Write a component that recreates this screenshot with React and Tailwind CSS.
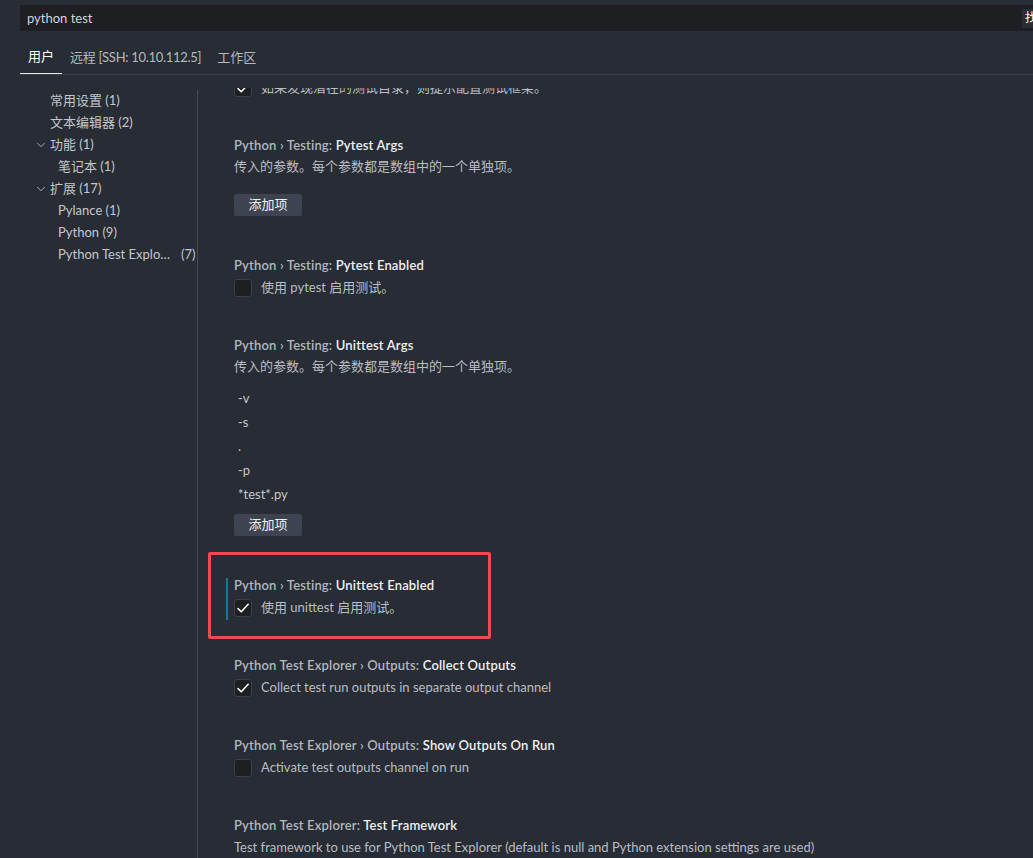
import React from "react";
import { ChevronDown } from "lucide-react";

const FONT = { fontFamily: 'Lato, "Noto Sans CJK SC", sans-serif' };

function Check() {
  return (
    <svg width="16" height="16" viewBox="0 0 16 16" fill="none">
      <path d="M3 8.6 L6.3 11.8 L13.2 4.2" stroke="#ffffff" strokeWidth="1.5" strokeLinecap="round" strokeLinejoin="round" />
    </svg>
  );
}

function Checkbox({ checked }) {
  return (
    <div className="w-[18px] h-[18px] shrink-0 rounded-[3px] border border-[#3b3f47] bg-[#1d1f23] flex items-center justify-center">
      {checked ? <Check /> : null}
    </div>
  );
}

function Title({ prefix, name }) {
  return (
    <div className="h-[20px] leading-[20px] text-[13px] font-semibold whitespace-pre tracking-[0.17px]">
      <span className="text-[#b3b7be]">{prefix}</span>
      <span className="text-[#f0f0f0]">{name}</span>
    </div>
  );
}

function BoolSetting({ prefix, name, text, checked, children }) {
  return (
    <div className="relative pl-[36px] pt-[12px] pb-[25px]">
      {children}
      <Title prefix={prefix} name={name} />
      <div className="mt-[3px] h-[20px] flex items-center gap-[9px]">
        <Checkbox checked={checked} />
        <span className="text-[13px] text-[#b9bdc4] whitespace-nowrap">{text}</span>
      </div>
    </div>
  );
}

function AddButton() {
  return (
    <div className="w-[68px] h-[22px] rounded-[2px] bg-[#3d4350] flex items-center justify-center text-[13px] text-[#f2f2f2]">
      添加项
    </div>
  );
}

function ArraySetting({ prefix, name, desc, items }) {
  return (
    <div className="pl-[36px] pt-[12px] pb-[27px]">
      <Title prefix={prefix} name={name} />
      <div className="mt-[2px] h-[20px] flex items-center text-[13px] text-[#b9bdc4] whitespace-nowrap">{desc}</div>
      {items.length > 0 ? (
        <div className="mt-[10px] flex flex-col">
          {items.map((it, i) => (
            <div key={i} className="h-[24px] flex items-center pl-[4px] text-[13px] text-[#c4c7cc]">{it}</div>
          ))}
        </div>
      ) : null}
      <div className={items.length > 0 ? "mt-[7px]" : "mt-[17px]"}>
        <AddButton />
      </div>
    </div>
  );
}

function TocItem({ label, count, level, chevron, truncate }) {
  return (
    <div className={"h-[22px] flex items-center text-[13px] text-[#c3c6cc] " + (level === 1 ? "pl-[58px]" : "pl-[50px]")}>
      {chevron ? (
        <ChevronDown size={14} strokeWidth={1.4} className="text-[#c3c6cc] -ml-[16px] mr-[2px]" />
      ) : null}
      {truncate ? (
        <>
          <span className="w-[116px] truncate">{label}</span>
          <span className="ml-[7px]">{count}</span>
        </>
      ) : (
        <span className="whitespace-nowrap">{label} {count}</span>
      )}
    </div>
  );
}

export default function App() {
  return (
    <div className="w-[1033px] h-[858px] overflow-hidden bg-[#282c34] flex flex-col" style={FONT}>
      {/* search */}
      <div className="ml-[20px] mt-[5px] w-[1200px] h-[26px] shrink-0 bg-[#1d1f23] flex items-center">
        <span className="pl-[7px] pt-[1px] w-[1002px] shrink-0 text-[13px] text-[#d0d3d8]">python test</span>
        <span className="h-[19px] pl-[3px] pr-[4px] bg-[#2a2d34] flex items-center text-[12px] text-[#ffffff] whitespace-nowrap">找到 16 个设置</span>
      </div>

      {/* tabs */}
      <div className="ml-[20px] mt-[10px] flex border-b border-[#3b3f48] shrink-0">
        <div className="h-[33px] px-[8px] flex items-center border-b border-[#e6e6e6] text-[13px] text-[#ffffff]">用户</div>
        <div className="h-[33px] px-[8px] flex items-center text-[13px] text-[#b6b9bf] tracking-[-0.3px]">远程 [SSH: 10.10.112.5]</div>
        <div className="h-[33px] px-[8px] flex items-center text-[13px] text-[#b6b9bf]">工作区</div>
      </div>

      {/* body */}
      <div className="mt-[13px] flex flex-1 min-h-0">
        <div className="w-[198px] shrink-0 mt-[2px] border-r border-[#454a55] flex flex-col">
          <TocItem label="常用设置" count="(1)" />
          <TocItem label="文本编辑器" count="(2)" />
          <TocItem label="功能" count="(1)" chevron />
          <TocItem label="笔记本" count="(1)" level={1} />
          <TocItem label="扩展" count="(17)" chevron />
          <TocItem label="Pylance" count="(1)" level={1} />
          <TocItem label="Python" count="(9)" level={1} />
          <TocItem label="Python Test Explorer" count="(7)" level={1} truncate />
        </div>

        <div className="flex-1 min-w-0 overflow-hidden">
          <div className="-mt-[45px] flex flex-col">
            <BoolSetting
              prefix="Python › Testing: "
              name="Prompt To Configure"
              text="如果发现潜在的测试目录，则提示配置测试框架。"
              checked
            />
            <ArraySetting
              prefix="Python › Testing: "
              name="Pytest Args"
              desc="传入的参数。每个参数都是数组中的一个单独项。"
              items={[]}
            />
            <BoolSetting prefix="Python › Testing: " name="Pytest Enabled" text="使用 pytest 启用测试。" />
            <ArraySetting
              prefix="Python › Testing: "
              name="Unittest Args"
              desc="传入的参数。每个参数都是数组中的一个单独项。"
              items={["-v", "-s", ".", "-p", "*test*.py"]}
            />
            <BoolSetting prefix="Python › Testing: " name="Unittest Enabled" text="使用 unittest 启用测试。" checked>
              <div className="absolute left-[28px] top-[15px] w-[2px] h-[42px] bg-[#13799c]" />
              <div className="absolute left-[10px] top-[-11px] w-[283px] h-[87px] border-[3px] border-[#ec4b4f] rounded-[2px] pointer-events-none" />
            </BoolSetting>
            <BoolSetting
              prefix="Python Test Explorer › Outputs: "
              name="Collect Outputs"
              text="Collect test run outputs in separate output channel"
              checked
            />
            <BoolSetting
              prefix="Python Test Explorer › Outputs: "
              name="Show Outputs On Run"
              text="Activate test outputs channel on run"
            />
            <div className="pl-[36px] pt-[12px]">
              <Title prefix="Python Test Explorer: " name="Test Framework" />
              <div className="mt-[3px] h-[20px] flex items-center text-[13px] text-[#b9bdc4] whitespace-nowrap">
                Test framework to use for Python Test Explorer (default is null and Python extension settings are used)
              </div>
            </div>
          </div>
        </div>
      </div>
    </div>
  );
}
